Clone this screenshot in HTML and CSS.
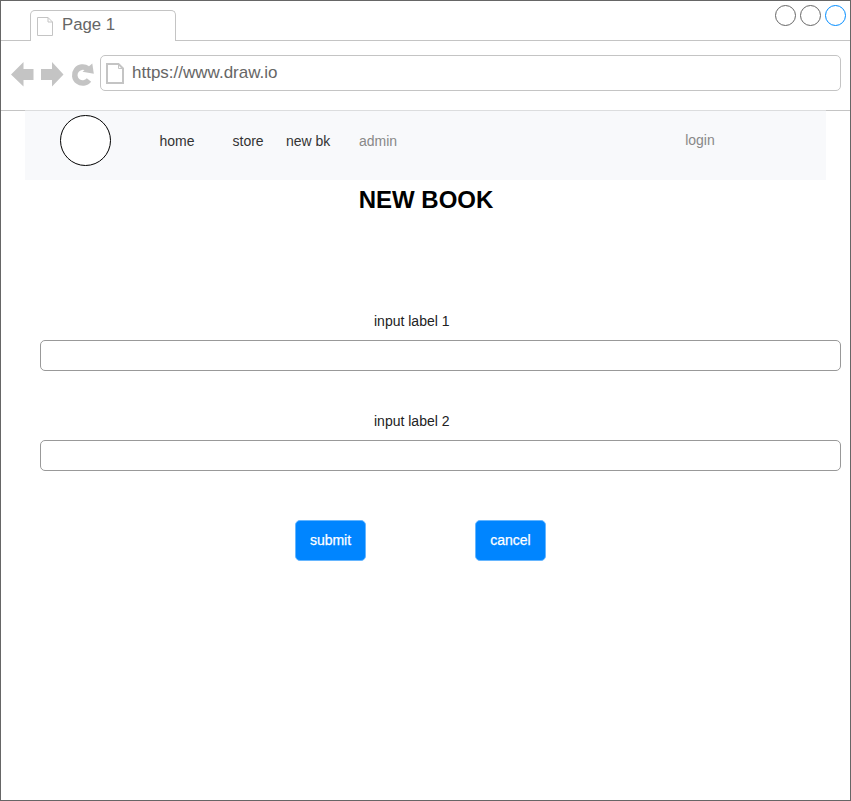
FILE: index.html
```html
<!DOCTYPE html>
<html lang="en">
<head>
<meta charset="utf-8">
<title>New book</title>
<link rel="stylesheet" href="styles.css">
</head>
<body>
<div class="window">
  <div class="tabbar">
    <div class="tab">
      <svg class="tab-icon" width="18" height="20" viewBox="0 0 18 20" fill="none" stroke="#c4c4c4"><path d="M1.5 1.5H12L16.5 6V19.5H1.5ZM12 1.5V6H16.5"/></svg>
      <span class="tab-title">Page 1</span>
    </div>
    <div class="controls">
      <span class="control"></span>
      <span class="control"></span>
      <span class="control control-active"></span>
    </div>
  </div>
  <div class="toolbar">
    <svg class="tools" width="84" height="26" viewBox="0 0 84 26" fill="#c4c4c4">
      <path d="M0 13.500L12.500 1V8H22.500V19H12.500V25.500Z"/>
      <path d="M52.500 13.500L41 1V8H30V19H41V25.500Z"/>
      <path d="M76.500 7.600A8 8 0 1 0 78 19" fill="none" stroke="#c4c4c4" stroke-width="5.600"/>
      <path d="M81.300 2.500L82.800 12.700L71.500 10.700Z"/>
    </svg>
    <div class="address">
      <svg class="page-icon" width="18" height="21" viewBox="0 0 18 21" fill="none" stroke="#c4c4c4" stroke-width="2"><path d="M1 1H12.500L17 5.500V20H1Z"/><path stroke-width="1" d="M12.500 1V5.500H17"/></svg>
      <span class="url">https://www.draw.io</span>
    </div>
  </div>
  <nav class="nav">
    <span class="logo"></span>
    <a class="link home">home</a>
    <a class="link store">store</a>
    <a class="link newbk">new bk</a>
    <a class="link muted">admin</a>
    <a class="link muted login">login</a>
  </nav>
  <h1 class="title">NEW BOOK</h1>
  <form class="form">
    <label class="label" for="f1">input label 1</label>
    <input class="field" id="f1" type="text">
    <label class="label" for="f2">input label 2</label>
    <input class="field" id="f2" type="text">
    <div class="actions">
      <button class="btn" type="button">submit</button>
      <button class="btn" type="button">cancel</button>
    </div>
  </form>
</div>
</body>
</html>
```
FILE: styles.css
```css
* { box-sizing: border-box; }
body {
  margin: 0;
  background: #fff;
  font-family: "Liberation Sans", Arial, sans-serif;
  font-size: 14px;
  line-height: 16px;
}
.window {
  width: 851px;
  height: 801px;
  border: 1px solid #666;
  overflow: hidden;
}
.tabbar {
  display: flex;
  justify-content: space-between;
  height: 40px;
  padding: 4px 4px 0 29px;
  border-bottom: 1px solid #c4c4c4;
}
.tab {
  display: flex;
  width: 146px;
  height: 31px;
  margin-top: 5px;
  padding: 5px 0 0 5px;
  border: 1px solid #c4c4c4;
  border-bottom: 0;
  border-radius: 5px 5px 0 0;
  background: #fff;
}
.tab-title {
  margin-left: 8px;
  margin-top: -1px;
  font-size: 16.8px;
  line-height: 20px;
  color: #666;
}
.controls { display: flex; gap: 4px; }
.control {
  width: 21px;
  height: 21px;
  border: 1px solid #666;
  border-radius: 50%;
}
.control-active { border-color: #008cff; }
.toolbar {
  display: flex;
  height: 70px;
  padding: 14px 9px 0 10px;
  border-bottom: 1px solid #c4c4c4;
}
.tools { flex: none; margin-top: 6px; }
.address {
  display: flex;
  width: 741px;
  height: 36px;
  margin-left: 5px;
  padding: 7px 0 0 5px;
  border: 1px solid #c4c4c4;
  border-radius: 5px;
}
.url {
  margin-left: 8px;
  font-size: 17px;
  line-height: 20px;
  color: #666;
}
.nav {
  display: flex;
  align-items: flex-start;
  position: relative;
  width: 801px;
  height: 70px;
  margin: -1px 0 0 24px;
  padding: 4px 0 0 35px;
  border-top: 1px solid #dcddde;
  background: #f8f9fb;
}
.logo {
  width: 51px;
  height: 51px;
  border: 1px solid #000;
  border-radius: 50%;
  background: #fff;
}
.link {
  margin-top: 18px;
  color: #333;
}
.home { width: 73px; margin-left: 48.5px; }
.store { width: 53.5px; }
.newbk { width: 73px; }
.muted { color: #888; }
.login { margin: 17px 0 0 288px; }
.title {
  margin: 6px 0 0 1px;
  font-size: 24px;
  line-height: 28px;
  text-align: center;
  color: #000;
}
.form {
  width: 801px;
  margin: 99px 0 0 39px;
}
.label {
  display: block;
  width: max-content;
  margin-left: 334px;
  color: #222;
}
.field {
  display: block;
  width: 801px;
  height: 31px;
  margin: 11px 0 42px;
  border: 1px solid #999;
  border-radius: 5px;
  background: #fff;
}
.actions {
  display: flex;
  gap: 109px;
  padding: 7px 0 0 255px;
}
.btn {
  width: 71px;
  height: 41px;
  padding: 0 0 2px;
  border: 1px solid #66b6ff;
  border-radius: 5px;
  background: #0085ff;
  color: #fff;
  font: 14px/16px "Liberation Sans", Arial, sans-serif;
  -webkit-text-stroke: 0.25px #fff;
}
```
